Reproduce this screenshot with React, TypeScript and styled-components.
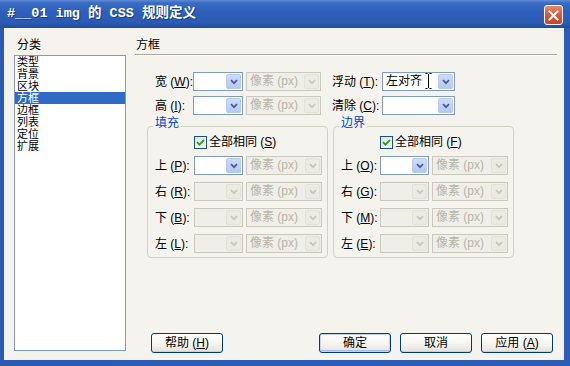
import React from 'react';
import styled, { createGlobalStyle } from 'styled-components';

const Global = createGlobalStyle`
  html, body { margin: 0; padding: 0; background: #fff; }
  body { font-family: "Liberation Sans", "Noto Sans CJK SC", sans-serif; font-size: 12px; }
  * { box-sizing: border-box; }
`;

const Window = styled.div`
  width: 570px;
  height: 366px;
  display: flex;
  flex-direction: column;
  overflow: hidden;
  background: linear-gradient(to right, #2a5ab3, #2c5cb6);
`;

const TitleBar = styled.div`
  height: 28px;
  flex: none;
  display: flex;
  align-items: center;
  padding: 0 7px 0 7px;
  background: linear-gradient(to bottom, #5d8bd8 0px, #3a6bc3 3px, #2f5fba 12px, #2b5ab3 23px, #214c9e 28px);
`;

const Title = styled.div`
  flex: 1;
  color: #fff;
  font-family: "Liberation Mono", "Noto Sans CJK SC", monospace;
  font-weight: bold;
  font-size: 13.5px;
  line-height: 16px;
  white-space: pre;
  text-shadow: 1px 1px 0 #173d85;
`;

const CloseButton = styled.div`
  width: 19px;
  height: 20px;
  margin-top: 2px;
  border: 1px solid #f4f4f4;
  border-radius: 3px;
  background: linear-gradient(to bottom, #e98a6a, #d4583a 50%, #c8462a);
  display: flex;
  align-items: center;
  justify-content: center;
`;

const Body = styled.div`
  flex: 1;
  margin: 0 6px 6px 4px;
  background: #f4f3ee;
  display: grid;
  grid-template-columns: 112px 1fr;
  column-gap: 9px;
  padding: 11px 7px 9px 10px;
  min-height: 0;
`;

const LeftColumn = styled.div`
  display: flex;
  flex-direction: column;
  min-height: 0;
`;

const SmallHeading = styled.div`
  font-size: 12px;
  line-height: 12px;
  padding-left: 3px;
  margin-bottom: 4px;
  color: #000;
`;

const ListBox = styled.div`
  flex: 1;
  border: 1px solid #7f9db9;
  background: #fff;
  display: flex;
  flex-direction: column;
`;

const ListItem = styled.div<{ $selected?: boolean }>`
  height: 12px;
  line-height: 12px;
  font-size: 11px;
  padding-left: 2px;
  overflow: hidden;
  color: ${p => (p.$selected ? '#fff' : '#000')};
  background: ${p => (p.$selected ? '#316ac5' : 'transparent')};
`;

const RightColumn = styled.div`
  display: flex;
  flex-direction: column;
  min-height: 0;
`;

const SectionHeading = styled.div`
  font-size: 12px;
  line-height: 12px;
  height: 16px;
  padding-left: 1px;
  border-bottom: 1px solid #a9a89f;
  box-shadow: 0 1px 0 #fff;
`;

const Form = styled.div`
  margin-top: 17px;
  padding-left: 12px;
  display: flex;
  flex-direction: column;
`;

const TopRow = styled.div`
  display: flex;
  align-items: center;
  height: 19px;
  padding-left: 8px;
  & + & { margin-top: 5px; }
`;

const Label = styled.div<{ $w: number; $ml?: number }>`
  width: ${p => p.$w}px;
  margin-left: ${p => p.$ml ?? 0}px;
  flex: none;
  font-size: 12px;
  line-height: 14px;
  white-space: nowrap;
  color: #000;
`;

const Key = styled.span`
  text-decoration: underline;
`;

const SelectBox = styled.div<{ $w: number; $ml?: number; $disabled?: boolean }>`
  position: relative;
  width: ${p => p.$w}px;
  margin-left: ${p => p.$ml ?? 0}px;
  height: 19px;
  flex: none;
  display: flex;
  align-items: stretch;
  padding: 1px;
  border: 1px solid ${p => (p.$disabled ? '#cbc9bd' : '#7f9db9')};
  background: ${p => (p.$disabled ? '#efeee8' : '#fff')};
`;

const SelectText = styled.div<{ $disabled?: boolean }>`
  flex: 1;
  min-width: 0;
  padding-left: 2px;
  font-size: 12px;
  line-height: 15px;
  white-space: nowrap;
  overflow: hidden;
  color: ${p => (p.$disabled ? '#b8b5a7' : '#000')};
`;

const DropButton = styled.div<{ $disabled?: boolean }>`
  width: 15px;
  flex: none;
  border-radius: 2px;
  display: flex;
  align-items: center;
  justify-content: center;
  border: 1px solid ${p => (p.$disabled ? '#e3e2da' : '#b8caf3')};
  background: ${p => (p.$disabled ? '#ebeae3' : 'linear-gradient(to bottom, #cddcfd, #b4c8f5)')};
`;

const Cursor = styled.svg`
  position: absolute;
  left: 42px;
  top: 0px;
`;

const GroupRow = styled.div`
  display: flex;
  gap: 5px;
  margin-top: 2px;
`;

const Group = styled.fieldset`
  width: 181px;
  margin: 0;
  padding: 0 4px 4px 7px;
  min-width: 0;
  border: 1px solid #d2d1c2;
  border-radius: 4px;
`;

const Legend = styled.legend`
  font-size: 12px;
  line-height: 12px;
  padding: 0 2px 7px 2px;
  margin-left: -2px;
  color: #0046d5;
`;

const CheckRow = styled.div`
  display: flex;
  align-items: center;
  height: 13px;
  margin-left: 39px;
  gap: 2px;
  font-size: 12px;
  line-height: 13px;
`;

const CheckBox = styled.div`
  width: 13px;
  height: 13px;
  flex: none;
  border: 1px solid #1c5180;
  background: linear-gradient(135deg, #e0dfd8, #fff);
  display: flex;
  align-items: center;
  justify-content: center;
`;

const FieldRow = styled.div`
  display: flex;
  align-items: center;
  height: 19px;
  margin-top: 7px;
  &:first-of-type { margin-top: 4px; }
`;

const Footer = styled.div`
  margin-top: auto;
  margin-bottom: -2px;
  display: flex;
  gap: 9px;
  padding: 0 4px 0 16px;
`;

const Spacer = styled.div`
  flex: 1;
`;

const Button = styled.div<{ $default?: boolean }>`
  width: 72px;
  height: 20px;
  flex: none;
  border: 1px solid #003c74;
  border-radius: 3px;
  background: linear-gradient(to bottom, #ffffff, #f4f3ee 60%, #e3e1d6);
  box-shadow: ${p => (p.$default ? 'inset 0 0 0 1px #c2d3f7, inset 0 -1px 0 1px #a6bff0' : 'inset 0 -1px 0 #d6d0c5')};
  display: flex;
  align-items: center;
  justify-content: center;
  font-size: 12px;
  line-height: 14px;
  color: #000;
`;

const Chevron: React.FC<{ disabled?: boolean }> = ({ disabled }) => (
  <svg width="8" height="6" viewBox="0 0 8 6">
    <path d="M1 1.2 L4 4.2 L7 1.2" fill="none" stroke={disabled ? '#c9c7bb' : '#4d6185'} strokeWidth="1.8" />
  </svg>
);

type SelectProps = { w: number; ml?: number; disabled?: boolean; text?: string; children?: React.ReactNode };

const Select: React.FC<SelectProps> = ({ w, ml, disabled, text, children }) => (
  <SelectBox $w={w} $ml={ml} $disabled={disabled}>
    <SelectText $disabled={disabled}>{text}</SelectText>
    <DropButton $disabled={disabled}>
      <Chevron disabled={disabled} />
    </DropButton>
    {children}
  </SelectBox>
);

const UNIT = '像素 (px)';

type Side = { name: string; key: string };

const GroupBox: React.FC<{ title: string; checkKey: string; sides: Side[] }> = ({ title, checkKey, sides }) => (
  <Group>
    <Legend>{title}</Legend>
    <CheckRow>
      <CheckBox>
        <svg width="9" height="9" viewBox="0 0 9 9">
          <path d="M1 4.2 L3.4 6.6 L8 1.8" fill="none" stroke="#21a121" strokeWidth="1.8" />
        </svg>
      </CheckBox>
      <span>
        全部相同 (<Key>{checkKey}</Key>)
      </span>
    </CheckRow>
    {sides.map((s, i) => (
      <FieldRow key={s.name}>
        <Label $w={39}>
          {s.name} (<Key>{s.key}</Key>):
        </Label>
        <Select w={49} disabled={i !== 0} />
        <Select w={76} ml={3} disabled text={UNIT} />
      </FieldRow>
    ))}
  </Group>
);

const categories = ['类型', '背景', '区块', '方框', '边框', '列表', '定位', '扩展'];

export default function App() {
  return (
    <>
      <Global />
      <Window>
        <TitleBar>
          <Title>#__01 img 的 CSS 规则定义</Title>
          <CloseButton>
            <svg width="11" height="11" viewBox="0 0 11 11">
              <path d="M1.5 1.5 L9.5 9.5 M9.5 1.5 L1.5 9.5" stroke="#fff" strokeWidth="2" strokeLinecap="square" />
            </svg>
          </CloseButton>
        </TitleBar>
        <Body>
          <LeftColumn>
            <SmallHeading>分类</SmallHeading>
            <ListBox>
              {categories.map(c => (
                <ListItem key={c} $selected={c === '方框'}>
                  {c}
                </ListItem>
              ))}
            </ListBox>
          </LeftColumn>
          <RightColumn>
            <SectionHeading>方框</SectionHeading>
            <Form>
              <TopRow>
                <Label $w={38}>
                  宽 (<Key>W</Key>):
                </Label>
                <Select w={50} />
                <Select w={75} ml={3} disabled text={UNIT} />
                <Label $w={50} $ml={11}>
                  浮动 (<Key>T</Key>):
                </Label>
                <Select w={73} text="左对齐">
                  <Cursor width="7" height="16" viewBox="0 0 7 16">
                    <path d="M0.5 0.5 H2.5 M4.5 0.5 H6.5 M3.5 1 V15 M0.5 15.5 H2.5 M4.5 15.5 H6.5" stroke="#000" strokeWidth="1" fill="none" />
                  </Cursor>
                </Select>
              </TopRow>
              <TopRow>
                <Label $w={38}>
                  高 (<Key>I</Key>):
                </Label>
                <Select w={50} />
                <Select w={75} ml={3} disabled text={UNIT} />
                <Label $w={50} $ml={11}>
                  清除 (<Key>C</Key>):
                </Label>
                <Select w={73} />
              </TopRow>
              <GroupRow>
                <GroupBox
                  title="填充"
                  checkKey="S"
                  sides={[
                    { name: '上', key: 'P' },
                    { name: '右', key: 'R' },
                    { name: '下', key: 'B' },
                    { name: '左', key: 'L' },
                  ]}
                />
                <GroupBox
                  title="边界"
                  checkKey="F"
                  sides={[
                    { name: '上', key: 'O' },
                    { name: '右', key: 'G' },
                    { name: '下', key: 'M' },
                    { name: '左', key: 'E' },
                  ]}
                />
              </GroupRow>
            </Form>
            <Footer>
              <Button>
                帮助 (<Key>H</Key>)
              </Button>
              <Spacer />
              <Button $default>确定</Button>
              <Button>取消</Button>
              <Button>
                应用 (<Key>A</Key>)
              </Button>
            </Footer>
          </RightColumn>
        </Body>
      </Window>
    </>
  );
}
